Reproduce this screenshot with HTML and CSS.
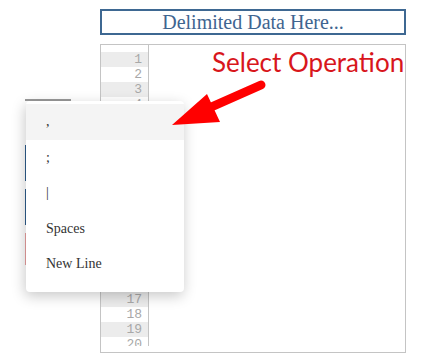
FILE: index.html
```html
<!DOCTYPE html>
<html lang="en">
<head>
    <meta charset="UTF-8">
    <title>Delimiter Tool</title>
    <link rel="stylesheet" href="styles.css">
</head>
<body>

    <div class="page">
        <div class="title-box">Delimited Data Here...</div>

        <div class="tools">
            <div class="tool-top"></div>
            <div class="tool-btn blue"></div>
            <div class="tool-btn blue"></div>
            <div class="tool-btn red"></div>
        </div>

        <div class="editor">
            <div class="gutter">
                <div class="ln">1</div><div class="ln">2</div><div class="ln">3</div><div class="ln">4</div>
                <div class="ln">5</div><div class="ln">6</div><div class="ln">7</div><div class="ln">8</div>
                <div class="ln">9</div><div class="ln">10</div><div class="ln">11</div><div class="ln">12</div>
                <div class="ln">13</div><div class="ln">14</div><div class="ln">15</div><div class="ln">16</div>
                <div class="ln">17</div><div class="ln">18</div><div class="ln">19</div><div class="ln">20</div>
            </div>
            <div class="code"></div>
        </div>

        <!-- annotation -->
        <div class="note">Select Operation</div>
        <svg class="arrow" width="436" height="361" viewBox="0 0 436 361">
            <line x1="261" y1="85" x2="200" y2="112" stroke="#f00" stroke-width="9" stroke-linecap="round"/>
            <polygon points="172,125 207,94 220,122" fill="#f00"/>
        </svg>

        <!-- dropdown -->
        <ul class="menu">
            <li class="active">,</li>
            <li>;</li>
            <li>|</li>
            <li>Spaces</li>
            <li>New Line</li>
        </ul>
    </div>

</body>
</html>
```

FILE: styles.css
```css
/* General */
body {
    margin: 0;
    background: #fff;
    font-family: 'Liberation Serif', serif;
}

.page {
    position: relative;
    width: 436px;
    height: 361px;
    display: grid;
    grid-template-columns: 25px 75px 306px;
    grid-template-rows: 26px 309px;
    row-gap: 9px;
    padding-top: 9px;
    box-sizing: border-box;
    overflow: hidden;
}

.title-box {
    grid-column: 3;
    grid-row: 1;
    border: 2px solid #3e6892;
    color: #3f6590;
    font-size: 20px;
    line-height: 22px;
    text-align: center;
}

/* buttons hidden behind the menu */
.tools {
    grid-column: 2;
    grid-row: 2;
    margin-top: 55px;
    display: flex;
    flex-direction: column;
    gap: 8px;
    width: 46px;
}

.tool-top {
    height: 36px;
    border-top: 2px solid #999;
}

.tool-btn {
    height: 36px;
}

.tool-btn.blue {
    background: #2e5d8c;
}

.tool-btn.red {
    background: #e9a0a0;
    height: 32px;
}

/* editor */
.editor {
    grid-column: 3;
    grid-row: 2;
    border: 1px solid #c4c4c4;
    display: flex;
}

.gutter {
    width: 48px;
    height: 301px;
    border-right: 1px solid #c4c4c4;
    padding-top: 7px;
    box-sizing: border-box;
    overflow: hidden;
}

.ln {
    height: 15px;
    line-height: 15px;
    padding-right: 6px;
    text-align: right;
    font-family: 'Liberation Mono', monospace;
    font-size: 13px;
    color: #a8a8a8;
}

.ln:nth-child(odd) {
    background: #ececec;
}

.code {
    flex: 1;
}

/* annotation */
.note {
    position: absolute;
    left: 212px;
    top: 46px;
    font-family: 'Lato', sans-serif;
    font-size: 26px;
    color: #d8161c;
    white-space: nowrap;
}

.arrow {
    position: absolute;
    left: 0;
    top: 0;
    pointer-events: none;
    z-index: 2;
}

/* dropdown */
.menu {
    position: absolute;
    left: 26px;
    top: 101px;
    width: 158px;
    height: 191px;
    margin: 0;
    padding: 3px 0 0;
    list-style: none;
    background: #fff;
    border-radius: 4px;
    box-shadow: -1px 4px 14px rgba(0, 0, 0, 0.22);
    box-sizing: border-box;
    z-index: 1;
}

.menu li {
    height: 35.5px;
    line-height: 35.5px;
    padding-left: 20px;
    font-size: 14px;
    color: #333;
}

.menu li.active {
    background: #f4f4f4;
}
```
